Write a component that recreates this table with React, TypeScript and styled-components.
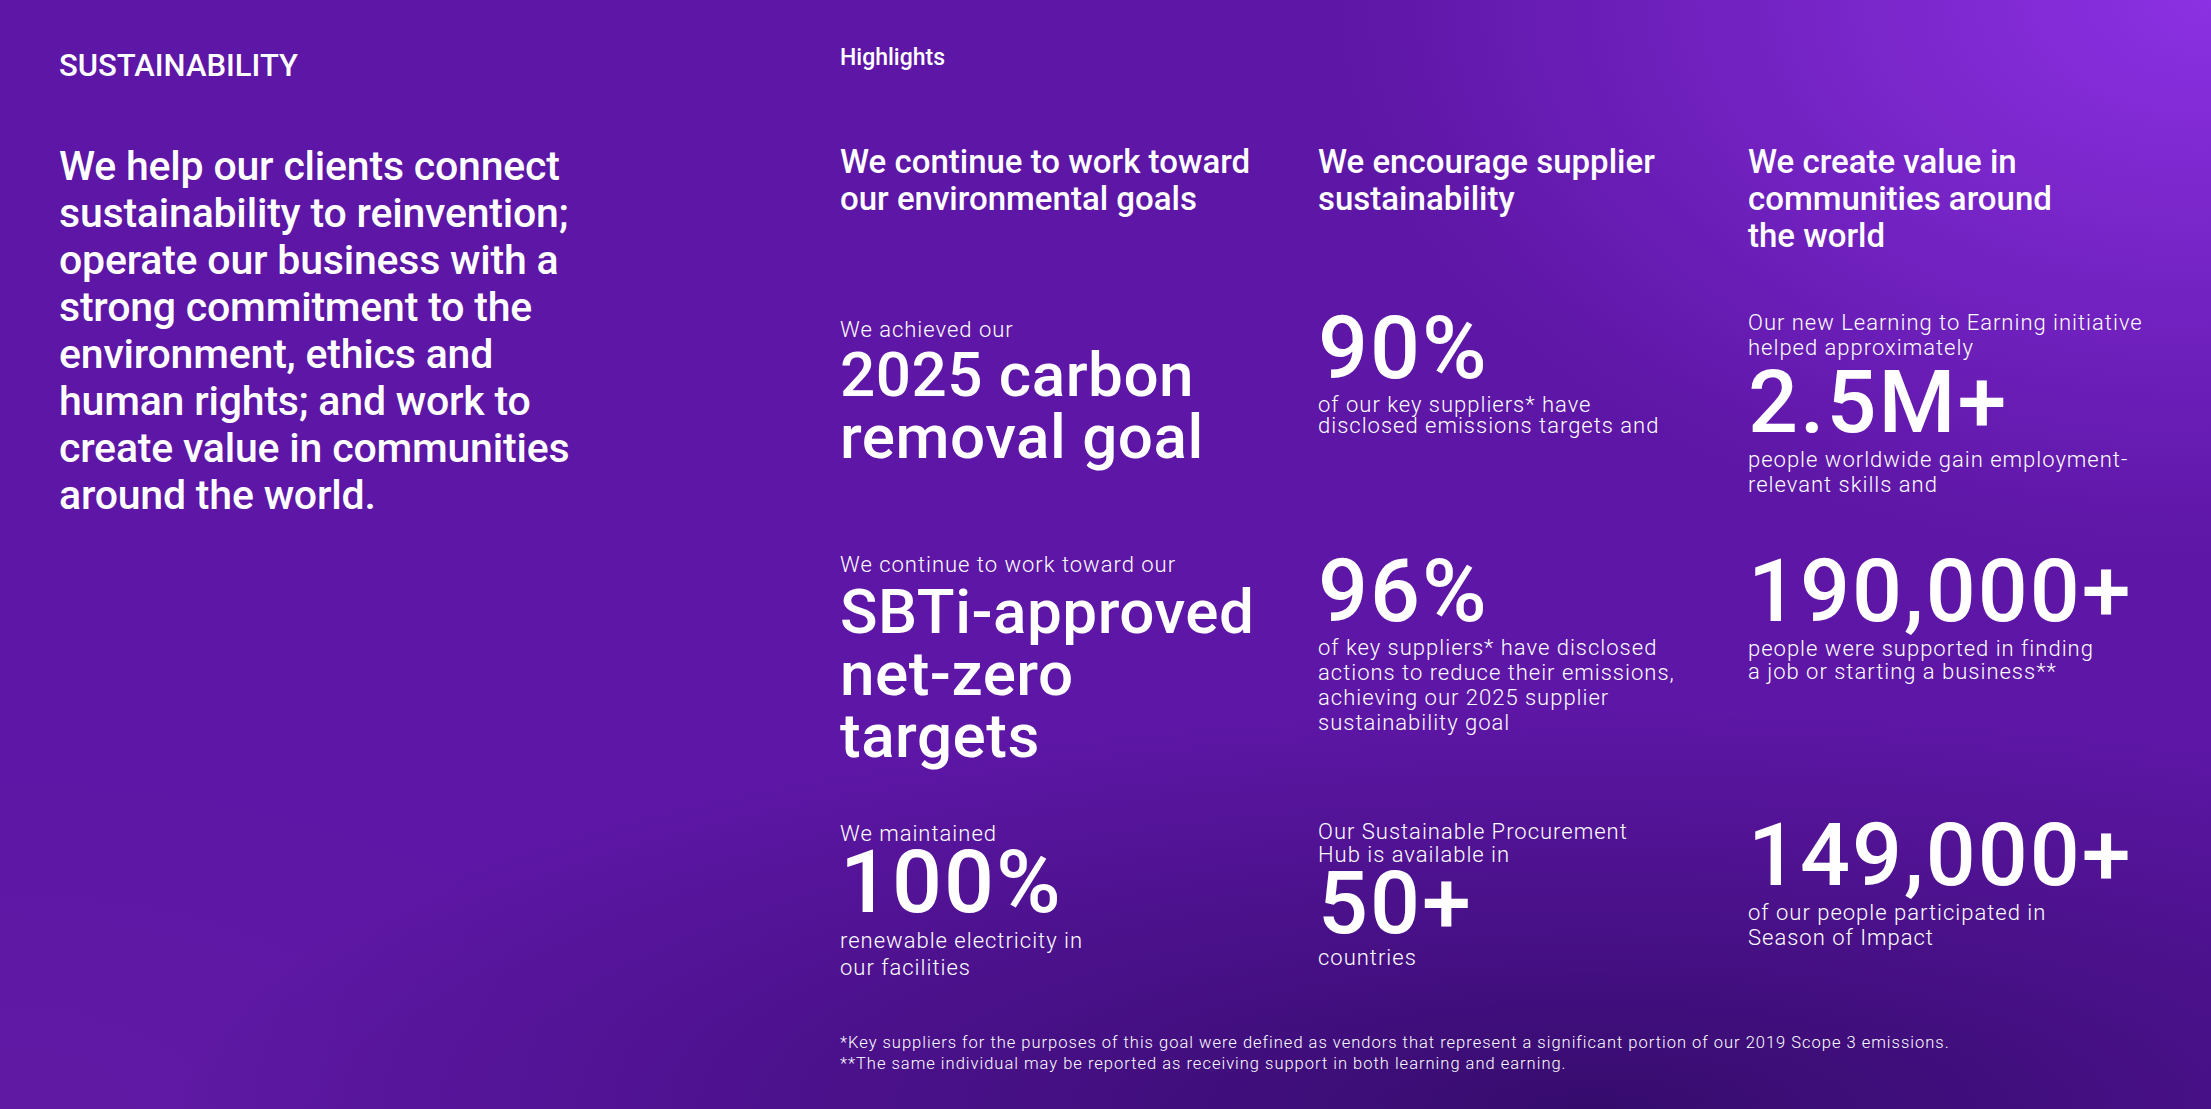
import React from "react";
import styled, { createGlobalStyle } from "styled-components";

const Global = createGlobalStyle`
  html, body { margin: 0; padding: 0; }
  body {
    font-family: Roboto, "Liberation Sans", Arial, sans-serif;
    color: #ffffff;
    -webkit-font-smoothing: antialiased;
  }
  * { box-sizing: border-box; }
`;

const Page = styled.div`
  display: flex;
  width: 100%;
  height: 1109px;
  overflow: hidden;
  background:
    radial-gradient(ellipse 55% 70% at 100% 0%, rgba(142, 50, 230, 0.95), rgba(142, 50, 230, 0) 72%),
    radial-gradient(ellipse 80% 45% at 72% 100%, rgba(44, 9, 96, 0.8), rgba(44, 9, 96, 0) 80%),
    radial-gradient(ellipse 40% 40% at 0% 100%, rgba(96, 28, 160, 0.5), rgba(96, 28, 160, 0) 80%),
    #5d16a5;
`;

const Intro = styled.section`
  width: 840px;
  flex: none;
  padding: 48px 0 0 59px;
`;

const Eyebrow = styled.h2`
  margin: 0;
  font-size: 31px;
  line-height: 36px;
  font-weight: 500;
`;

const Lead = styled.p`
  margin: 59px 0 0;
  width: 640px;
  font-size: 41px;
  line-height: 47px;
  font-weight: 500;
  letter-spacing: -0.2px;
`;

const Highlights = styled.section`
  flex: 1;
  padding: 44px 59px 0 0;
  display: flex;
  flex-direction: column;
`;

const Label = styled.h3`
  margin: 0;
  font-size: 23px;
  line-height: 28px;
  font-weight: 500;
`;

const Grid = styled.div`
  margin-top: 71px;
  display: grid;
  grid-template-columns: 478px 430px 1fr;
  row-gap: 54px;
  align-items: start;
`;

const Cell = styled.div<{ $offset?: number }>`
  display: flex;
  flex-direction: column;
  align-items: flex-start;
  margin-top: ${(p) => p.$offset ?? 0}px;
`;

const Heading = styled.h4`
  margin: 0;
  font-size: 33px;
  line-height: 37px;
  font-weight: 500;
`;

const Small = styled.p<{ $lh: number; $mb?: number; $mt?: number }>`
  margin: ${(p) => p.$mt ?? 0}px 0 ${(p) => p.$mb ?? 0}px;
  font-size: 22px;
  line-height: ${(p) => p.$lh}px;
  font-weight: 300;
  letter-spacing: 1px;
  white-space: nowrap;
`;

const BigText = styled.p`
  margin: 0;
  font-size: 62px;
  line-height: 62px;
  font-weight: 500;
  letter-spacing: 0.5px;
  white-space: nowrap;
`;

const BigNumber = styled.p`
  margin: 0;
  font-size: 88px;
  line-height: 76px;
  font-weight: 500;
  letter-spacing: 2px;
  white-space: nowrap;
`;

const Footnotes = styled.div`
  margin-top: 51px;
  font-size: 16.5px;
  line-height: 21px;
  font-weight: 300;
  letter-spacing: 1px;
`;

const FootLine = styled.p`
  margin: 0;
  white-space: nowrap;
`;

const Lines = ({ lines }: { lines: string[] }) => (
  <>
    {lines.map((l, i) => (
      <React.Fragment key={i}>
        {i > 0 && <br />}
        {l}
      </React.Fragment>
    ))}
  </>
);

export default function App() {
  return (
    <>
      <Global />
      <Page>
        <Intro>
          <Eyebrow>SUSTAINABILITY</Eyebrow>
          <Lead>
            <Lines
              lines={[
                "We help our clients connect",
                "sustainability to reinvention;",
                "operate our business with a",
                "strong commitment to the",
                "environment, ethics and",
                "human rights; and work to",
                "create value in communities",
                "around the world.",
              ]}
            />
          </Lead>
        </Intro>

        <Highlights>
          <Label>Highlights</Label>
          <Grid>
            <Cell>
              <Heading>
                <Lines lines={["We continue to work toward", "our environmental goals"]} />
              </Heading>
            </Cell>
            <Cell>
              <Heading>
                <Lines lines={["We encourage supplier", "sustainability"]} />
              </Heading>
            </Cell>
            <Cell>
              <Heading>
                <Lines lines={["We create value in", "communities around", "the world"]} />
              </Heading>
            </Cell>

            <Cell $offset={9}>
              <Small $lh={25} $mb={2}>We achieved our</Small>
              <BigText>
                <Lines lines={["2025 carbon", "removal goal"]} />
              </BigText>
            </Cell>
            <Cell $offset={2}>
              <BigNumber>90%</BigNumber>
              <Small $lh={21} $mt={8}>
                <Lines lines={["of our key suppliers* have", "disclosed emissions targets and"]} />
              </Small>
            </Cell>
            <Cell $offset={2}>
              <Small $lh={25} $mb={4}>
                <Lines lines={["Our new Learning to Earning initiative", "helped approximately"]} />
              </Small>
              <BigNumber>2.5M+</BigNumber>
              <Small $lh={25} $mt={7}>
                <Lines lines={["people worldwide gain employment-", "relevant skills and"]} />
              </Small>
            </Cell>

            <Cell $offset={1}>
              <Small $lh={25} $mb={4}>We continue to work toward our</Small>
              <BigText>
                <Lines lines={["SBTi-approved", "net-zero", "targets"]} />
              </BigText>
            </Cell>
            <Cell $offset={2}>
              <BigNumber>96%</BigNumber>
              <Small $lh={25} $mt={6}>
                <Lines
                  lines={[
                    "of key suppliers* have disclosed",
                    "actions to reduce their emissions,",
                    "achieving our 2025 supplier",
                    "sustainability goal",
                  ]}
                />
              </Small>
            </Cell>
            <Cell $offset={2}>
              <BigNumber>190,000+</BigNumber>
              <Small $lh={22.5} $mt={9}>
                <Lines lines={["people were supported in finding", "a job or starting a business**"]} />
              </Small>
            </Cell>

            <Cell>
              <Small $lh={25} $mb={-2}>We maintained</Small>
              <BigNumber>100%</BigNumber>
              <Small $lh={27} $mt={7}>
                <Lines lines={["renewable electricity in", "our facilities"]} />
              </Small>
            </Cell>
            <Cell>
              <Small $lh={22.5} $mb={-1}>
                <Lines lines={["Our Sustainable Procurement", "Hub is available in"]} />
              </Small>
              <BigNumber>50+</BigNumber>
              <Small $lh={25} $mt={4}>countries</Small>
            </Cell>
            <Cell $offset={-4}>
              <BigNumber>149,000+</BigNumber>
              <Small $lh={25} $mt={7}>
                <Lines lines={["of our people participated in", "Season of Impact"]} />
              </Small>
            </Cell>
          </Grid>
          <Footnotes>
            <FootLine>
              *Key suppliers for the purposes of this goal were defined as vendors that represent a significant portion of our 2019 Scope 3 emissions.
            </FootLine>
            <FootLine>**The same individual may be reported as receiving support in both learning and earning.</FootLine>
          </Footnotes>
        </Highlights>
      </Page>
    </>
  );
}
